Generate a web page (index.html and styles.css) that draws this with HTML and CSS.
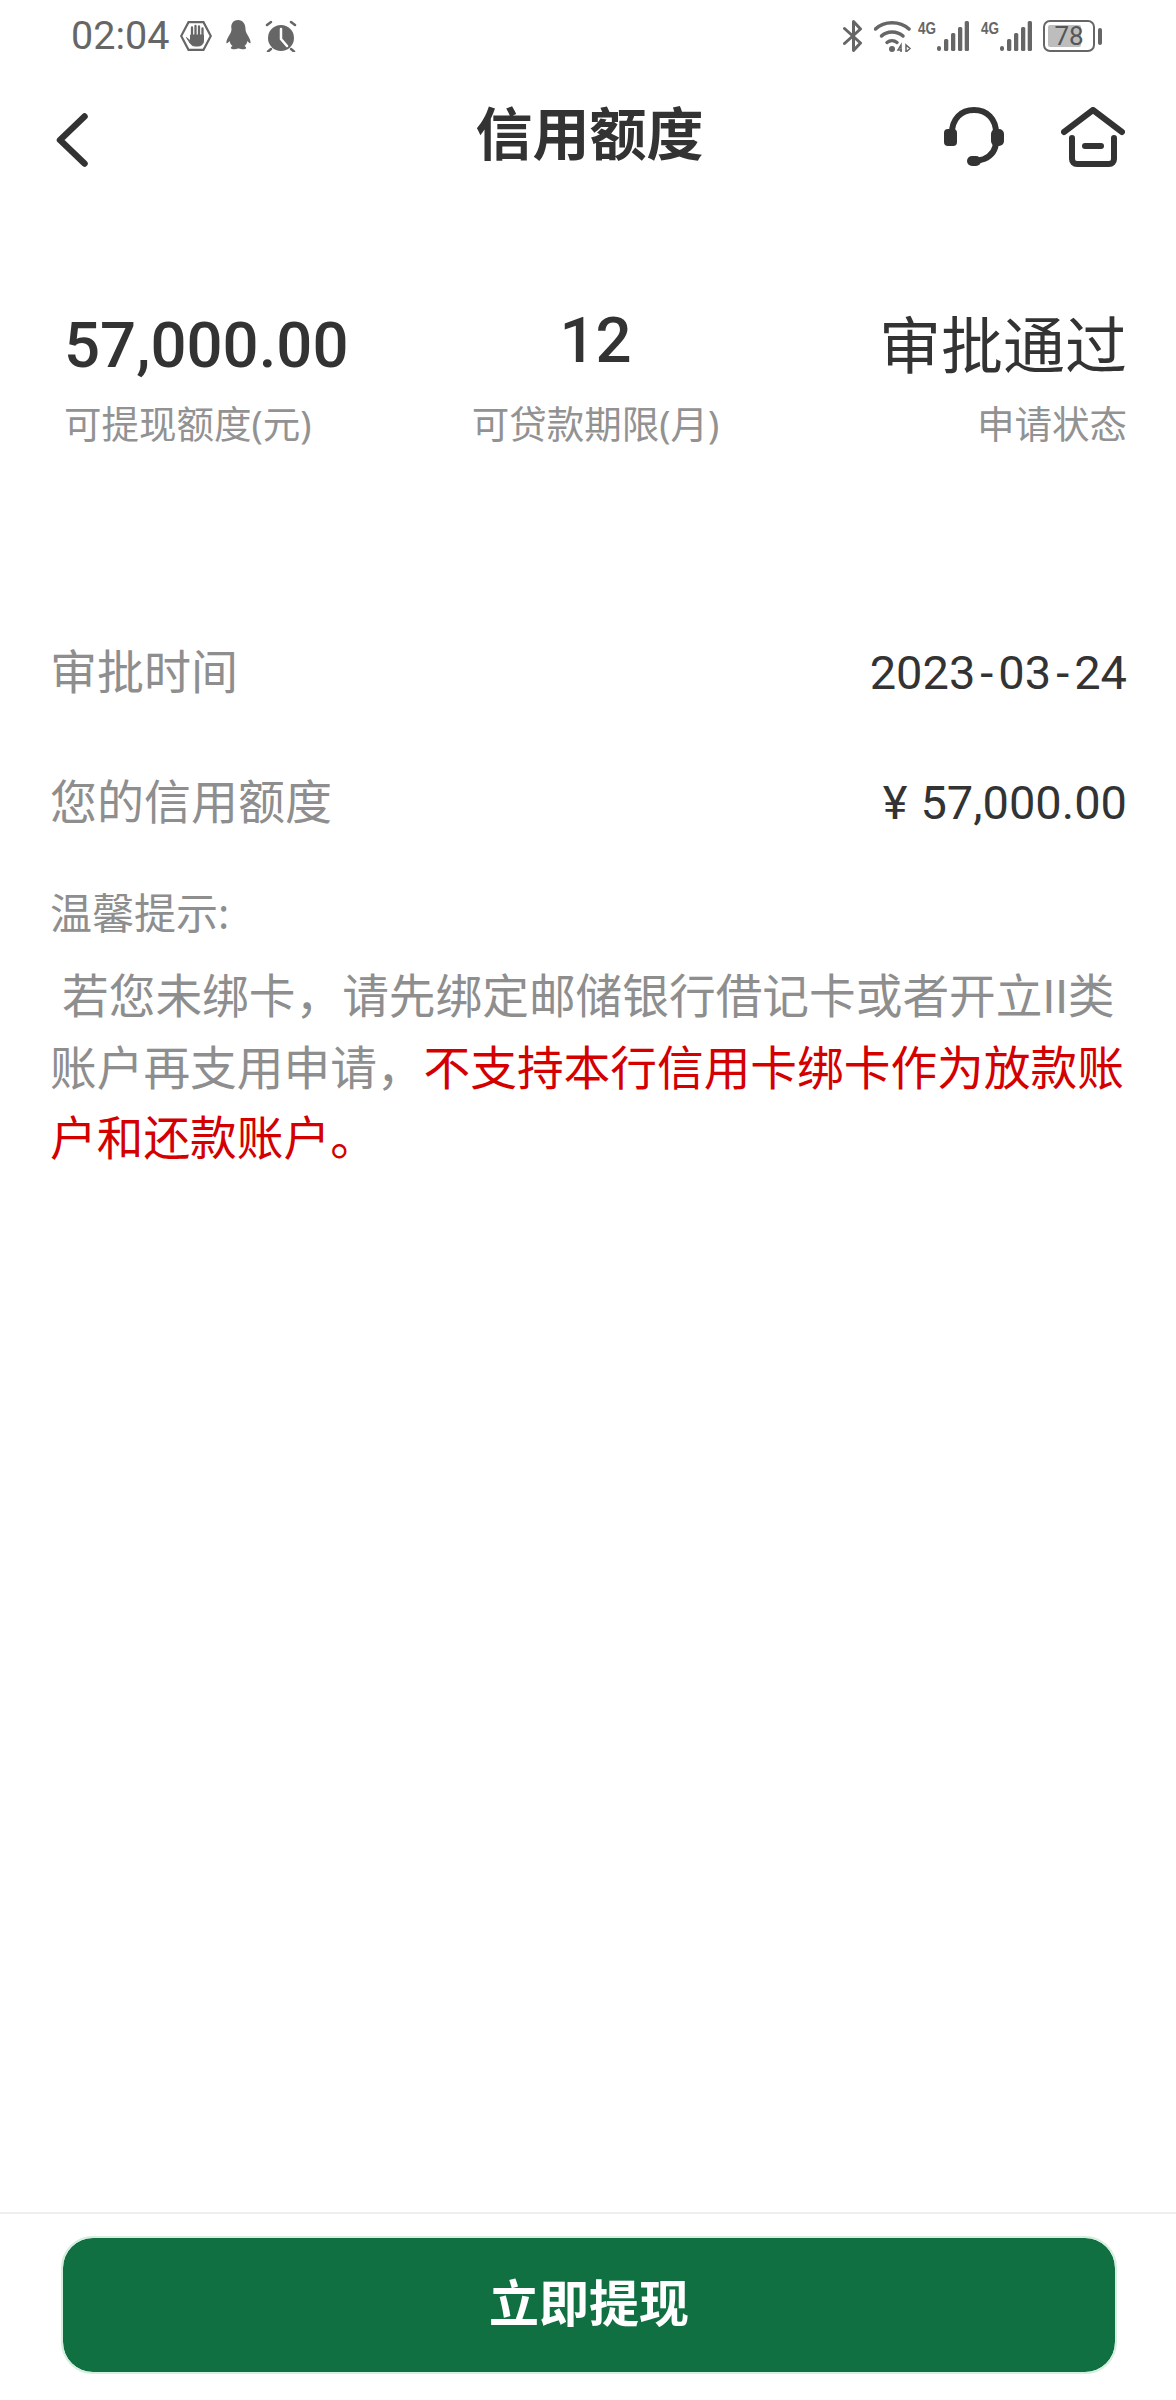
FILE: index.html
```html
<!DOCTYPE html>
<html lang="zh-CN">
<head>
    <meta charset="UTF-8">
    <meta name="viewport" content="width=device-width, initial-scale=1.0">
    <title>信用额度</title>
    <link rel="stylesheet" href="styles.css">
</head>
<body>
    <div class="page">
        <!-- status bar -->
        <div class="status-bar">
            <div class="status-left">
                <span class="clock">02:04</span>
                <svg class="ico-hand" viewBox="0 0 32 30">
                    <path d="M8.500 1.200h15L30.800 15l-7.300 13.800h-15L1.200 15z" fill="none" stroke="#666" stroke-width="2.200"/>
                    <path d="M12 6.500v9M15.500 5v10M19 5.500v10M22.500 7.500v8" fill="none" stroke="#666" stroke-width="2.300" stroke-linecap="round"/>
                    <path d="M6.500 16.500l4 3.500v-6h13v6c0 3-2.500 5-5 5h-3.500c-2.500 0-4-1.500-5-3z" fill="#666" stroke="#666" stroke-linejoin="round"/>
                </svg>
                <svg class="ico-qq" viewBox="0 0 26 32">
                    <path d="M13 0c5 0 7.500 4 7.500 9 0 2 .5 3 1.500 5 2 3 4 7 3.500 9-.5 1-2-.5-3-2-.5 2-1.500 4-3 5 1 .5 2 1.500 1.500 2.500-1 1-5 .8-7 0h-1c-2 .8-6 1-7 0-.5-1 .5-2 1.500-2.500-1.500-1-2.500-3-3-5-1 1.500-2.500 3-3 2-.5-2 1.500-6 3.500-9 1-2 1.500-3 1.500-5C5.500 4 8 0 13 0z" fill="#666"/>
                </svg>
                <svg class="ico-alarm" viewBox="0 0 32 32">
                    <circle cx="16" cy="18" r="13" fill="#666"/>
                    <path d="M16 9v10l6 7" fill="none" stroke="#fff" stroke-width="2.500" stroke-linecap="round"/>
                    <path d="M2 5l4-3M30 5l-4-3M6 29l-3 2.500M26 29l3 2.500" fill="none" stroke="#666" stroke-width="2.500" stroke-linecap="round"/>
                </svg>
            </div>
            <div class="status-right">
                <svg class="ico-bt" viewBox="0 0 20 34">
                    <path d="M1.500 9.500l16 14.500-7 7.500V2.500l7 7.500-16 14.500" fill="none" stroke="#666" stroke-width="3" stroke-linejoin="round" stroke-linecap="round"/>
                </svg>
                <svg class="ico-wifi" viewBox="0 0 38 32">
                    <path d="M1.500 9C10 .5 26 .5 35 9" fill="none" stroke="#666" stroke-width="3.500" stroke-linecap="round"/>
                    <path d="M7.500 16C13 10.500 23 10.500 29 16" fill="none" stroke="#666" stroke-width="3.500" stroke-linecap="round"/>
                    <path d="M13 22.500c3-2.500 7-2.500 10 0" fill="none" stroke="#666" stroke-width="3.500" stroke-linecap="round"/>
                    <circle cx="18" cy="29" r="3" fill="#666"/>
                    <path d="M27 32v-7l-3 5h4M32 25v7l4-3.500z" fill="none" stroke="#666" stroke-width="1.500"/>
                </svg>
                <svg class="ico-signal" viewBox="0 0 51 32">
                    <text x="0" y="14" class="net-label" textLength="18" lengthAdjust="spacingAndGlyphs">4G</text>
                    <rect x="19" y="26" width="4" height="5" rx="2" fill="#666"/>
                    <rect x="26" y="19" width="4.300" height="12" rx="1.500" fill="#666"/>
                    <rect x="33" y="13" width="4.300" height="18" rx="1.500" fill="#666"/>
                    <rect x="40" y="7" width="4.300" height="24" rx="1.500" fill="#666"/>
                    <rect x="46.700" y="1" width="4.300" height="30" rx="1.500" fill="#666"/>
                </svg>
                <svg class="ico-signal" viewBox="0 0 51 32">
                    <text x="0" y="14" class="net-label" textLength="18" lengthAdjust="spacingAndGlyphs">4G</text>
                    <rect x="19" y="26" width="4" height="5" rx="2" fill="#666"/>
                    <rect x="26" y="19" width="4.300" height="12" rx="1.500" fill="#666"/>
                    <rect x="33" y="13" width="4.300" height="18" rx="1.500" fill="#666"/>
                    <rect x="40" y="7" width="4.300" height="24" rx="1.500" fill="#666"/>
                    <rect x="46.700" y="1" width="4.300" height="30" rx="1.500" fill="#666"/>
                </svg>
                <svg class="ico-battery" viewBox="0 0 60 32">
                    <rect x="1" y="1" width="50" height="30" rx="6" fill="none" stroke="#666" stroke-width="2"/>
                    <rect x="5" y="5" width="33" height="22" rx="2" fill="#bdbdbd"/>
                    <rect x="55" y="8" width="4" height="17" rx="2" fill="#666"/>
                    <text x="26" y="25" class="battery-label" text-anchor="middle">78</text>
                </svg>
            </div>
        </div>

        <!-- nav bar -->
        <div class="nav-bar">
            <svg class="ico-back" viewBox="0 0 32 54">
                <path d="M28.500 3.500L4 27l24.500 23.500" fill="none" stroke="#333" stroke-width="6.500" stroke-linecap="round" stroke-linejoin="round"/>
            </svg>
            <div class="nav-title">信用额度</div>
            <div class="nav-actions">
                <svg class="ico-headset" viewBox="0 0 62 60">
                    <path d="M9 26C9 12 18 3 31 3s22 9 22 23M53 34c0 9-5 15-12 18-3 1-5 1.500-8 2" fill="none" stroke="#333" stroke-width="6"/>
                    <rect x="1" y="22" width="13" height="17" rx="4" fill="#333"/>
                    <rect x="48" y="22" width="13" height="17" rx="5" fill="#333"/>
                    <rect x="24" y="49" width="14" height="10" rx="5" fill="#333"/>
                </svg>
                <svg class="ico-home" viewBox="0 0 64 60">
                    <path d="M3 25L32 3l29 22" fill="none" stroke="#333" stroke-width="6" stroke-linecap="round" stroke-linejoin="round"/>
                    <path d="M11 31v21c0 3 2 5 5 5h32c3 0 5-2 5-5V31" fill="none" stroke="#333" stroke-width="6" stroke-linecap="round"/>
                    <path d="M24 39h16" fill="none" stroke="#333" stroke-width="6" stroke-linecap="round"/>
                </svg>
            </div>
        </div>

        <div class="content">
            <div class="stats">
                <div class="stat stat-left">
                    <div class="stat-value value-amount">57,000.00</div>
                    <div class="stat-label">可提现额度(元)</div>
                </div>
                <div class="stat stat-center">
                    <div class="stat-value">12</div>
                    <div class="stat-label">可贷款期限(月)</div>
                </div>
                <div class="stat stat-right">
                    <div class="stat-value value-text">审批通过</div>
                    <div class="stat-label">申请状态</div>
                </div>
            </div>

            <div class="info-row">
                <span class="info-key">审批时间</span>
                <span class="info-val">2023<span class="dash">-</span>03<span class="dash">-</span>24</span>
            </div>
            <div class="info-row">
                <span class="info-key">您的信用额度</span>
                <span class="info-val"><span class="yen">¥</span>57,000.00</span>
            </div>

            <div class="tips-title">温馨提示:</div>
            <p class="tips-text">
                <span class="tips-indent">若您未绑卡，请先绑定邮储银行借记卡或者开立<span class="latin">II</span>类账户再支用申请，</span><span class="tips-warn">不支持本行信用卡绑卡作为放款账户和还款账户。</span>
            </p>
        </div>

        <div class="footer">
            <button class="btn-withdraw">立即提现</button>
        </div>
    </div>
</body>
</html>
```

FILE: styles.css
```css
* {
    box-sizing: border-box;
}
body {
    margin: 0;
    background: #fff;
    font-family: "Noto Sans", "Noto Sans CJK SC", sans-serif;
    color: #333;
}
svg {
    display: block;
}
.page {
    display: flex;
    flex-direction: column;
    width: 1176px;
    height: 2400px;
}

/* status bar */
.status-bar {
    display: flex;
    justify-content: space-between;
    align-items: center;
    height: 72px;
    padding: 0 73px 0 71px;
}
.status-left,
.status-right {
    display: flex;
    align-items: center;
}
.clock {
    font-family: Roboto, sans-serif;
    font-size: 39.500px;
    line-height: 46px;
    color: #666;
}
.ico-hand { width: 32px; height: 30px; margin-left: 11px; }
.ico-qq { width: 26px; height: 32px; margin-left: 13px; }
.ico-alarm { width: 32px; height: 32px; margin-left: 14px; }
.ico-bt { width: 20px; height: 34px; }
.ico-wifi { width: 38px; height: 32px; margin-left: 11px; }
.ico-signal { width: 51px; height: 32px; margin-left: 6px; overflow: visible; }
.ico-signal + .ico-signal { margin-left: 12px; }
.ico-battery { width: 60px; height: 32px; margin-left: 11px; }
.net-label {
    font-family: "Liberation Sans", sans-serif;
    font-size: 17px;
    font-weight: 700;
    fill: #666;
}
.battery-label {
    font-family: Roboto, sans-serif;
    font-size: 26px;
    fill: #555;
}

/* nav bar */
.nav-bar {
    display: grid;
    grid-template-columns: 1fr auto 1fr;
    align-items: center;
    height: 124px;
    padding: 0 51px 0 56px;
}
.ico-back { width: 32px; height: 54px; margin-top: 12px; }
.nav-title {
    font-size: 57px;
    font-weight: 700;
    line-height: 70px;
    color: #333;
    margin: -3px 0 0 -2px;
}
.nav-actions {
    display: flex;
    justify-content: flex-end;
    align-items: center;
    gap: 56px;
    margin-top: 6px;
}
.ico-headset { width: 62px; height: 60px; }
.ico-home { width: 64px; height: 60px; }

.content {
    flex: 1;
    padding: 0 49px 0 50px;
}

/* three figures on top */
.stats {
    display: grid;
    grid-template-columns: 1fr auto 1fr;
    padding: 103px 0 0 14px;
    margin-bottom: 158px;
}
.stat-center {
    text-align: center;
}
.stat-right {
    text-align: right;
}
.stat-value {
    height: 84px;
    font-family: Roboto, "Noto Sans CJK SC", sans-serif;
    font-size: 63.500px;
    font-weight: 500;
    line-height: 84px;
    color: #333;
}
.value-amount {
    padding-top: 5px;
}
.value-text {
    padding-top: 1px;
    font-family: "Noto Sans CJK SC", sans-serif;
    font-size: 62px;
    font-weight: 400;
}
.stat-label {
    margin-top: 16px;
    font-size: 37.500px;
    line-height: 50px;
    color: #929292;
}

/* rows */
.info-row {
    display: flex;
    justify-content: space-between;
    align-items: center;
    height: 130px;
}
.info-key {
    margin-bottom: 8px;
    font-size: 47px;
    color: #8e8e8e;
}
.info-val {
    font-family: Roboto, sans-serif;
    font-size: 47px;
    color: #333;
}
.dash {
    padding: 0 5px;
}
.yen {
    margin-right: 13px;
}

.tips-title {
    margin-top: 18px;
    font-size: 42px;
    line-height: 56px;
    color: #8e8e8e;
}
.tips-text {
    width: 1080px;
    margin: 19px 0 0;
    font-size: 46.700px;
    line-height: 70px;
    color: #8e8e8e;
}
.tips-indent::before {
    content: "";
    padding-left: 12px;
}
.latin {
    font-family: Roboto, sans-serif;
}
.tips-warn {
    color: #d40000;
}

/* bottom button */
.footer {
    height: 188px;
    padding: 22px 59px 0 61px;
    border-top: 2px solid #eee;
}
.btn-withdraw {
    display: block;
    width: 100%;
    height: 138px;
    padding: 0 0 10px;
    border: 2px solid #d5eee0;
    border-radius: 32px;
    background: #107042;
    background-clip: padding-box;
    font-family: inherit;
    font-size: 50px;
    font-weight: 700;
    color: #fff;
}
```
